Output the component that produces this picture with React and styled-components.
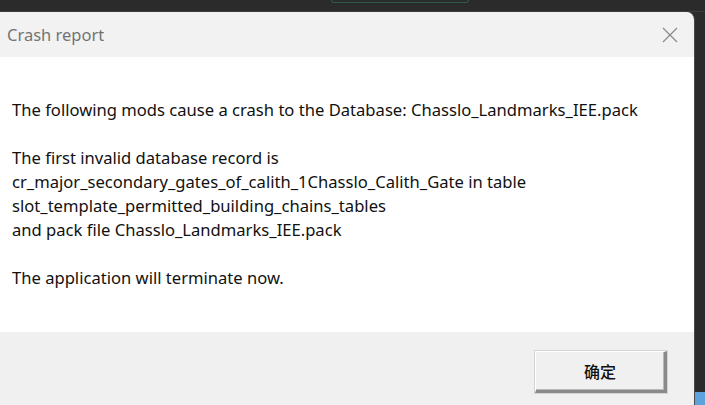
import React from 'react';
import styled, { createGlobalStyle } from 'styled-components';

const GlobalStyle = createGlobalStyle`
	html, body {
		margin: 0;
		padding: 0;
		background: #2b2b2b;
	}
	#root {
		width: 705px;
		height: 405px;
		overflow: hidden;
	}
`;

const Screen = styled.div`
	display: flex;
	flex-direction: column;
	width: 705px;
	height: 405px;
	background: #2b2b2b;
`;

const TopStrip = styled.div`
	height: 11px;
	flex: none;
	display: flex;
	align-items: flex-start;
	border-bottom: 1px solid #3c3c3c;
`;

const Tab = styled.div`
	margin-left: 331px;
	width: 138px;
	height: 3px;
	border: 1px solid #2f5a45;
	border-top: none;
	border-radius: 0 0 6px 6px;
	box-sizing: border-box;
`;

const Row = styled.div`
	flex: 1;
	display: flex;
	min-height: 0;
`;

const Dialog = styled.div`
	width: 695px;
	display: flex;
	flex-direction: column;
	border-top-right-radius: 8px;
	overflow: hidden;
	border-right: 1px solid #4a4a4a;
	box-sizing: border-box;
	font-family: 'Segoe UI', 'Noto Sans', 'Open Sans', sans-serif;
`;

const TitleBar = styled.div`
	height: 45px;
	flex: none;
	display: flex;
	align-items: center;
	justify-content: space-between;
	background: #f2f2f2;
	padding: 0 16px 0 7px;
	color: #747474;
	font-size: 16.5px;
`;

const Body = styled.div`
	flex: 1;
	background: #fff;
	padding: 41px 12px 0;
	color: #111;
	font-size: 16.6px;
	line-height: 24px;
`;

const Para = styled.p`
	margin: 0 0 24px;
	white-space: nowrap;
`;

const Footer = styled.div`
	height: 73px;
	flex: none;
	background: #f0f0f0;
	display: flex;
	justify-content: flex-end;
	align-items: flex-start;
	padding: 19px 27px 0 0;
	box-sizing: border-box;
`;

const OkButton = styled.button`
	width: 132px;
	height: 42px;
	background: #f0f0f0;
	border-style: solid;
	border-width: 1px 3px 3px 1px;
	border-color: #ffffff #8a8a8a #8a8a8a #ffffff;
	box-shadow: inset -1px -1px 0 #b8b8b8, 0 0 0 1px #d4d4d4;
	font-family: 'Noto Sans CJK SC', 'Noto Sans', sans-serif;
	font-size: 16px;
	font-weight: 500;
	color: #111;
	padding: 0;
`;

const SideStrip = styled.div`
	flex: 1;
	display: flex;
	flex-direction: column;
	justify-content: flex-end;
`;

const TaskbarBit = styled.div`
	height: 13px;
	background: #5ea2dd;
`;

const CloseIcon = () => (
	<svg width="16" height="16" viewBox="0 0 16 16">
		<path d="M1 1 L15 15 M15 1 L1 15" stroke="#8a8a8a" strokeWidth="1.2" fill="none" />
	</svg>
);

const App = () => {
	return (
		<>
			<GlobalStyle />
			<Screen>
				<TopStrip>
					<Tab />
				</TopStrip>
				<Row>
					<Dialog>
						<TitleBar>
							<span>Crash report</span>
							<CloseIcon />
						</TitleBar>
						<Body>
							<Para>The following mods cause a crash to the Database: Chasslo_Landmarks_IEE.pack</Para>
							<Para>
								The first invalid database record is
								<br />
								cr_major_secondary_gates_of_calith_1Chasslo_Calith_Gate in table
								<br />
								slot_template_permitted_building_chains_tables
								<br />
								and pack file Chasslo_Landmarks_IEE.pack
							</Para>
							<Para>The application will terminate now.</Para>
						</Body>
						<Footer>
							<OkButton>确定</OkButton>
						</Footer>
					</Dialog>
					<SideStrip>
						<TaskbarBit />
					</SideStrip>
				</Row>
			</Screen>
		</>
	);
};

export default App;
